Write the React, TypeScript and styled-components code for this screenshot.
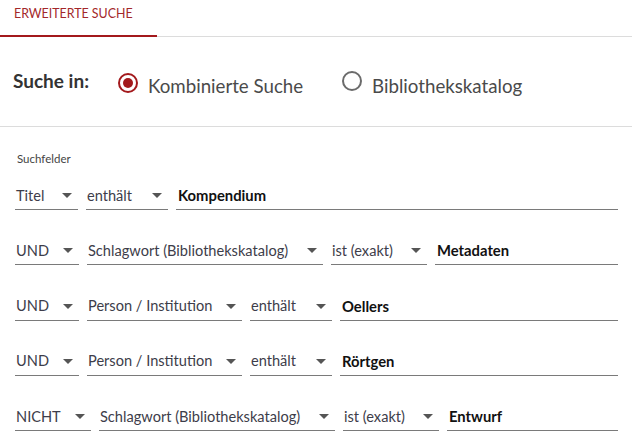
import React from "react";
import styled, { createGlobalStyle } from "styled-components";

const Global = createGlobalStyle`
  html, body { margin: 0; padding: 0; background: #fff; }
  body { font-family: "Source Sans Pro", Lato, "Liberation Sans", sans-serif; }
`;

const Page = styled.div`
  width: 632px;
  background: #fff;
`;

const TabBar = styled.div`
  display: flex;
  border-bottom: 1px solid #dcdcdc;
`;

const Tab = styled.div`
  width: 157px;
  box-sizing: border-box;
  height: 37px;
  padding: 6px 0 0 14px;
  font-size: 12.4px;
  color: #a3272a;
  border-bottom: 2px solid #a3191c;
  margin-bottom: -1px;
`;

const SourceBar = styled.div`
  display: flex;
  align-items: center;
  height: 89px;
  padding-left: 13px;
  border-bottom: 1px solid #dcdcdc;
`;

const SourceLabel = styled.div`
  font-size: 19px;
  font-weight: 700;
  color: #333;
  margin-right: 29px;
  margin-top: -3px;
`;

const RadioOption = styled.label<{ $gap?: number }>`
  display: flex;
  align-items: center;
  margin-right: ${(p) => p.$gap ?? 0}px;
`;

const RadioCircle = styled.span<{ $checked?: boolean }>`
  position: relative;
  width: 20px;
  height: 20px;
  box-sizing: border-box;
  border-radius: 50%;
  border: 2px solid ${(p) => (p.$checked ? "#a3191c" : "#6b6b6b")};
  margin-right: 10px;
  margin-top: ${(p) => (p.$checked ? 3 : -1)}px;
  &::after {
    content: "";
    display: ${(p) => (p.$checked ? "block" : "none")};
    position: absolute;
    left: 3px;
    top: 3px;
    width: 10px;
    height: 10px;
    border-radius: 50%;
    background: #a3191c;
  }
`;

const RadioText = styled.span`
  font-size: 18.7px;
  color: #4a4a4a;
  margin-top: 9px;
`;

const Fields = styled.div`
  padding: 24px 14px 0 15px;
`;

const FieldsLabel = styled.div`
  font-size: 11.5px;
  line-height: 16px;
  color: #444;
  padding-left: 2px;
`;

const Row = styled.div<{ $first?: boolean }>`
  display: flex;
  gap: 8px;
  height: 32px;
  margin-top: ${(p) => (p.$first ? 11 : 23.25)}px;
`;

const Select = styled.div<{ $w: number }>`
  position: relative;
  width: ${(p) => p.$w}px;
  flex: none;
  box-sizing: border-box;
  border-bottom: 1px solid #7a7a7a;
  display: flex;
  align-items: center;
  padding: 3px 0 0 1px;
  font-size: 14.6px;
  color: #3d3d4a;
  white-space: nowrap;
`;

const Arrow = styled.span`
  position: absolute;
  right: 6px;
  top: 15px;
  width: 0;
  height: 0;
  border-left: 5px solid transparent;
  border-right: 5px solid transparent;
  border-top: 5px solid #555;
`;

const Input = styled.div`
  flex: 1;
  border-bottom: 1px solid #7a7a7a;
  display: flex;
  align-items: center;
  padding: 3px 0 0 2px;
  font-size: 14.8px;
  font-weight: 700;
  color: #111;
`;

const W: Record<string, number> = {
  Titel: 63,
  UND: 64,
  NICHT: 76,
  "enthält": 82,
  "Schlagwort (Bibliothekskatalog)": 236,
  "Person / Institution": 155,
  "ist (exakt)": 96,
};

const rows: { selects: string[]; value: string }[] = [
  { selects: ["Titel", "enthält"], value: "Kompendium" },
  { selects: ["UND", "Schlagwort (Bibliothekskatalog)", "ist (exakt)"], value: "Metadaten" },
  { selects: ["UND", "Person / Institution", "enthält"], value: "Oellers" },
  { selects: ["UND", "Person / Institution", "enthält"], value: "Rörtgen" },
  { selects: ["NICHT", "Schlagwort (Bibliothekskatalog)", "ist (exakt)"], value: "Entwurf" },
];

export default function App() {
  return (
    <Page>
      <Global />
      <TabBar>
        <Tab>ERWEITERTE SUCHE</Tab>
      </TabBar>
      <SourceBar>
        <SourceLabel>Suche in:</SourceLabel>
        <RadioOption $gap={39}>
          <RadioCircle $checked />
          <RadioText>Kombinierte Suche</RadioText>
        </RadioOption>
        <RadioOption>
          <RadioCircle />
          <RadioText>Bibliothekskatalog</RadioText>
        </RadioOption>
      </SourceBar>
      <Fields>
        <FieldsLabel>Suchfelder</FieldsLabel>
        {rows.map((r, i) => (
          <Row key={i} $first={i === 0}>
            {r.selects.map((s, j) => (
              <Select key={j} $w={W[s]}>
                {s}
                <Arrow />
              </Select>
            ))}
            <Input>{r.value}</Input>
          </Row>
        ))}
      </Fields>
    </Page>
  );
}
